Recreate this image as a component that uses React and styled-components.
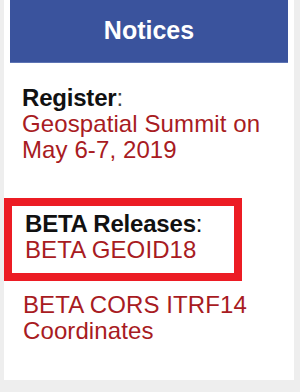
import React from "react";
import styled, { createGlobalStyle } from "styled-components";

const Global = createGlobalStyle`
  html, body { margin: 0; padding: 0; background: #eeeeee; }
  body { font-family: "Liberation Sans", Arial, sans-serif; }
`;

const Page = styled.div`
  width: 300px;
  height: 392px;
  background: #eeeeee;
  padding: 0 6px 0 4px;
  box-sizing: border-box;
`;

const Card = styled.div`
  background: #ffffff;
  height: 380px;
  padding: 0 6px 0 0;
  box-sizing: border-box;
`;

const Header = styled.div`
  margin-left: 6px;
  height: 63px;
  background: #3a539d;
  border-bottom: 1px solid #5d74b4;
  box-sizing: border-box;
  display: flex;
  align-items: center;
  justify-content: center;
  color: #ffffff;
  font-weight: bold;
  font-size: 25px;
  padding-bottom: 2px;
`;

const Body = styled.div`
  padding-top: 22px;
  display: flex;
  flex-direction: column;
  font-size: 24px;
  line-height: 26px;
`;

const Notice = styled.div`
  padding-left: ${(p) => p.$indent}px;
  margin-top: ${(p) => p.$top || 0}px;
`;

const Highlight = styled.div`
  margin-top: 35px;
  width: 238px;
  box-sizing: border-box;
  border: 8px solid #ec1c24;
  padding: 5px 0 10px 13px;
`;

const Label = styled.div`
  color: #111111;
  letter-spacing: -0.2px;
  b { font-weight: bold; }
  span { color: #444; }
`;

const Link = styled.a`
  display: block;
  color: #a81b22;
  text-decoration: none;
  letter-spacing: 0.1px;
`;

export default function App() {
  return (
    <>
      <Global />
      <Page>
        <Card>
          <Header>Notices</Header>
          <Body>
            <Notice $indent={18}>
              <Label>
                <b>Register</b>
                <span>:</span>
              </Label>
              <Link href="#">
                Geospatial Summit on
                <br />
                May 6-7, 2019
              </Link>
            </Notice>
            <Highlight>
              <Label>
                <b>BETA Releases</b>:
              </Label>
              <Link href="#">BETA GEOID18</Link>
            </Highlight>
            <Notice $indent={19} $top={11}>
              <Link href="#">
                BETA CORS ITRF14
                <br />
                Coordinates
              </Link>
            </Notice>
          </Body>
        </Card>
      </Page>
    </>
  );
}
